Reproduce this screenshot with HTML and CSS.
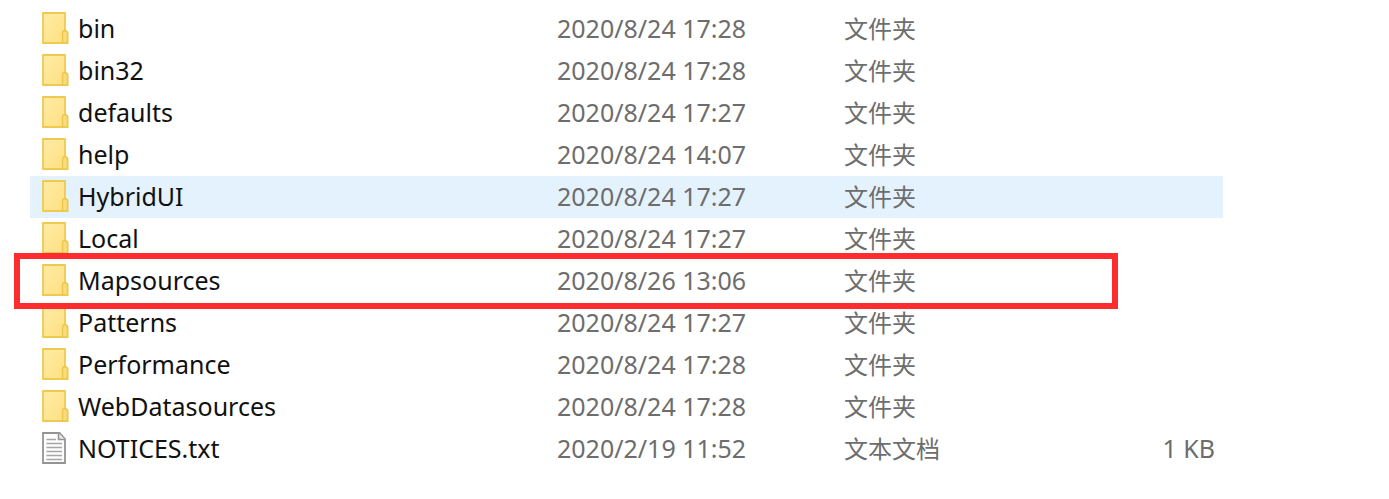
FILE: index.html
```html
<!DOCTYPE html>
<html lang="zh-CN">
<head>
    <meta charset="UTF-8">
    <meta name="viewport" content="width=device-width, initial-scale=1.0">
    <title>Mapsources</title>
    <link rel="stylesheet" href="styles.css">
</head>
<body>
    <svg class="symbols" aria-hidden="true">
        <linearGradient id="paper" x1="0" y1="0" x2="1" y2="1">
            <stop offset="0" stop-color="#ffeba6"/>
            <stop offset="1" stop-color="#ffe080"/>
        </linearGradient>
        <symbol id="folder" viewBox="0 0 28 34">
            <path d="M2 2h22v17.500l2.500 2v10.500h-24.500z" fill="url(#paper)" stroke="#eecb50" stroke-width="1.800"/>
            <path d="M21.500 32v-10q.3-2.500 2.500-2.500 2.500.8 2.500 3v9.500z" fill="#fbdc78" stroke="#ebc74c" stroke-width="1.400"/>
        </symbol>
        <symbol id="text" viewBox="0 0 28 34">
            <path d="M2 2h16.500l5.500 6v24h-22z" fill="#fdfdfd" stroke="#949494" stroke-width="1.800"/>
            <path d="M17.500 2v6.500h6.500" fill="#e6e6e6" stroke="#949494" stroke-width="1.500"/>
            <path d="M5.500 8.500h9.500M5.500 12.500h15.500M5.500 16.500h15.500M5.500 20.500h15.500M5.500 24.500h15.500M5.500 28.500h15.500" stroke="#a6a6a6" stroke-width="1.500"/>
        </symbol>
    </svg>

    <table class="files">
        <colgroup>
            <col class="col-name">
            <col class="col-date">
            <col class="col-type">
            <col>
        </colgroup>
        <tbody>
            <tr>
                <td><div class="name"><svg class="icon"><use href="#folder"/></svg>bin</div></td>
                <td>2020/8/24 17:28</td>
                <td class="type">文件夹</td>
                <td></td>
            </tr>
            <tr>
                <td><div class="name"><svg class="icon"><use href="#folder"/></svg>bin32</div></td>
                <td>2020/8/24 17:28</td>
                <td class="type">文件夹</td>
                <td></td>
            </tr>
            <tr>
                <td><div class="name"><svg class="icon"><use href="#folder"/></svg>defaults</div></td>
                <td>2020/8/24 17:27</td>
                <td class="type">文件夹</td>
                <td></td>
            </tr>
            <tr>
                <td><div class="name"><svg class="icon"><use href="#folder"/></svg>help</div></td>
                <td>2020/8/24 14:07</td>
                <td class="type">文件夹</td>
                <td></td>
            </tr>
            <tr class="hover">
                <td><div class="name"><svg class="icon"><use href="#folder"/></svg>HybridUI</div></td>
                <td>2020/8/24 17:27</td>
                <td class="type">文件夹</td>
                <td></td>
            </tr>
            <tr>
                <td><div class="name"><svg class="icon"><use href="#folder"/></svg>Local</div></td>
                <td>2020/8/24 17:27</td>
                <td class="type">文件夹</td>
                <td></td>
            </tr>
            <tr class="marked">
                <td><div class="name"><svg class="icon"><use href="#folder"/></svg>Mapsources</div></td>
                <td>2020/8/26 13:06</td>
                <td class="type">文件夹</td>
                <td></td>
            </tr>
            <tr>
                <td><div class="name"><svg class="icon"><use href="#folder"/></svg>Patterns</div></td>
                <td>2020/8/24 17:27</td>
                <td class="type">文件夹</td>
                <td></td>
            </tr>
            <tr>
                <td><div class="name"><svg class="icon"><use href="#folder"/></svg>Performance</div></td>
                <td>2020/8/24 17:28</td>
                <td class="type">文件夹</td>
                <td></td>
            </tr>
            <tr>
                <td><div class="name"><svg class="icon"><use href="#folder"/></svg>WebDatasources</div></td>
                <td>2020/8/24 17:28</td>
                <td class="type">文件夹</td>
                <td></td>
            </tr>
            <tr>
                <td><div class="name"><svg class="icon"><use href="#text"/></svg>NOTICES.txt</div></td>
                <td>2020/2/19 11:52</td>
                <td class="type">文本文档</td>
                <td class="size">1 KB</td>
            </tr>
        </tbody>
    </table>
</body>
</html>
```

FILE: styles.css
```css
body {
    margin: 0;
    padding: 8px 166px 8px 30px;
    background-color: #fff;
    font-family: "Noto Sans", "Noto Sans CJK SC", sans-serif;
    font-size: 25px;
    line-height: 40px;
    color: #6d6d6d;
}
.symbols {
    position: absolute;
    width: 0;
    height: 0;
}
.files {
    width: 100%;
    table-layout: fixed;
    border-collapse: collapse;
}
.files td {
    height: 42px;
    padding: 0;
    vertical-align: top;
    white-space: nowrap;
}
.col-name {
    width: 527px;
}
.col-date {
    width: 287px;
}
.col-type {
    width: 200px;
}
.name {
    display: flex;
    align-items: center;
    gap: 9px;
    padding-left: 11px;
    height: 40px;
    color: #111;
}
.icon {
    width: 28px;
    height: 34px;
}
.files .type {
    font-size: 24px;
    line-height: 42px;
}
.files .size {
    padding-right: 8px;
    text-align: right;
}
.hover {
    background-color: #e4f2fe;
}
.marked {
    position: relative;
}
/* red frame around the row */
.marked td:first-child::after {
    content: "";
    position: absolute;
    top: -7px;
    bottom: -7px;
    left: -16px;
    right: 105px;
    border: 6px solid #fd2d2f;
}
```
